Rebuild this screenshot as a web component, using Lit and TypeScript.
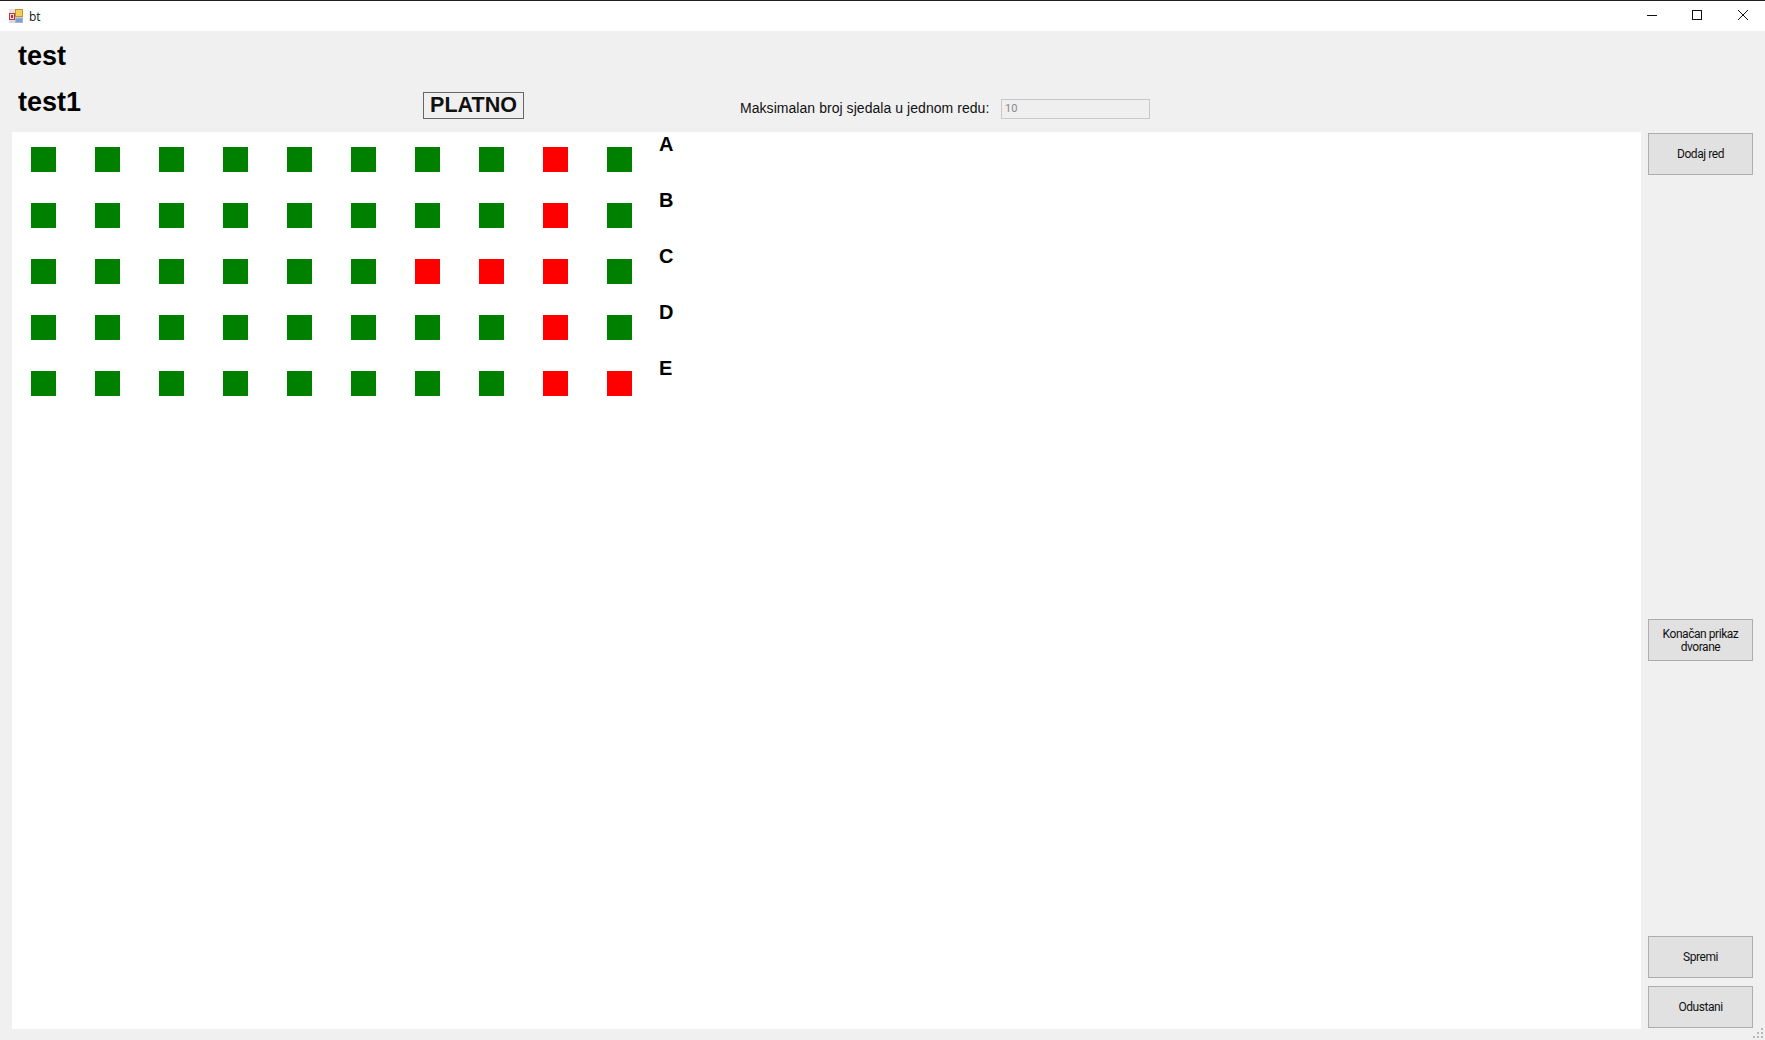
import { LitElement, html, css, svg } from "lit";
import { customElement } from "lit/decorators.js";

const ROWS: { letter: string; red: number[] }[] = [
  { letter: "A", red: [8] },
  { letter: "B", red: [8] },
  { letter: "C", red: [6, 7, 8] },
  { letter: "D", red: [8] },
  { letter: "E", red: [8, 9] },
];

@customElement("app-root")
export class AppRoot extends LitElement {
  static styles = css`
    :host { display: block; width: 1765px; height: 1040px; overflow: hidden; background: #f0f0f0; font-family: "Liberation Sans", Arial, sans-serif; color: #000; position: relative; }
    .window { display: flex; flex-direction: column; height: 1040px; }
    .titlebar { display: flex; align-items: center; height: 30px; background: #fff; border-top: 1px solid #1e1e1e; flex: none; }
    .app-icon { width: 14px; height: 14px; margin: 0 0 1px 9px; flex: none; }
    .title { margin-left: 6px; font: 12px "Open Sans", sans-serif; color: #111; }
    .controls { margin: 0 17px 2px auto; display: flex; gap: 35px; }
    .controls svg { width: 10px; height: 10px; display: block; }
    .controls svg:last-child { margin-left: 1px; }
    .head { display: flex; height: 101px; flex: none; }
    .titles { width: 423px; padding: 12px 0 0 18px; box-sizing: border-box; flex: none; font-size: 27px; font-weight: 700; line-height: 26px; }
    .titles div + div { margin-top: 20px; }
    .platno { margin-top: 61px; width: 101px; height: 27px; box-sizing: border-box; border: 1px solid #666; display: flex; align-items: center; justify-content: center; font-size: 21.5px; font-weight: 700; color: #111; flex: none; }
    .max-label { margin: 69px 0 0 216px; font-size: 14px; letter-spacing: 0.05px; line-height: 16px; width: 261px; flex: none; white-space: nowrap; color: #111; }
    .max-input { margin-top: 68px; width: 149px; height: 20px; box-sizing: border-box; border: 1px solid #c8c8c8; background: #efefef; color: #888; font: 11px/18px Roboto, sans-serif; padding-left: 3px; flex: none; }
    .body { display: flex; flex: 1; min-height: 0; }
    .panel { margin-left: 12px; width: 1629px; height: 897px; background: #fff; padding: 15px 0 0 19px; box-sizing: border-box; flex: none; }
    .row { display: flex; height: 56px; }
    .seats { display: flex; gap: 39px; }
    .seat { width: 25px; height: 25px; background: #008000; }
    .seat.red { background: #f00; }
    .letter { margin: -14px 0 0 27px; font-size: 20px; letter-spacing: -0.5px; font-weight: 700; line-height: 22px; }
    .side { margin-left: 7px; display: flex; flex-direction: column; padding-top: 1px; }
    button { width: 105px; height: 42px; box-sizing: border-box; border: 1px solid #adadad; background: #e1e1e1; padding: 1px 8px 0; font: 12px/13px Roboto, sans-serif; letter-spacing: -0.45px; color: #111; text-align: center; flex: none; }
    .b2 { margin-top: 444px; }
    .b3 { margin-top: 275px; }
    .b4 { margin-top: 8px; }
    .grip { position: absolute; right: 2px; bottom: 2px; width: 10px; height: 10px; }
  `;

  render() {
    return html`
      <div class="window">
        <div class="titlebar">
          <svg class="app-icon" viewBox="0 0 14 14">
            <rect x="0" y="0" width="14" height="14" fill="#e6e2e2"/>
            <rect x="6.5" y="0.5" width="7" height="7" fill="#f5cf55" stroke="#b8963a"/>
            <rect x="0.5" y="4.5" width="5" height="6" fill="#f1dede" stroke="#b5363c"/>
            <rect x="2" y="6" width="2" height="3" fill="#c3242c"/>
            <rect x="6.5" y="9" width="7" height="4.5" fill="#7ea0cc" stroke="#a9b6c9"/>
            <rect x="0.5" y="11.5" width="5" height="2" fill="#d4d4e4"/>
          </svg>
          <span class="title">bt</span>
          <div class="controls">
            <svg viewBox="0 0 10 10"><path d="M0 5.5H10" stroke="#111" fill="none"/></svg>
            <svg viewBox="0 0 10 10"><rect x="0.5" y="0.5" width="9" height="9" stroke="#111" fill="none"/></svg>
            <svg viewBox="0 0 10 10"><path d="M0 0L10 10M10 0L0 10" stroke="#111" fill="none"/></svg>
          </div>
        </div>
        <div class="head">
          <div class="titles"><div>test</div><div>test1</div></div>
          <div class="platno">PLATNO</div>
          <div class="max-label">Maksimalan broj sjedala u jednom redu:</div>
          <div class="max-input">10</div>
        </div>
        <div class="body">
          <div class="panel">
            ${ROWS.map(
              (r) => html`<div class="row">
                <div class="seats">
                  ${Array.from({ length: 10 }, (_, i) => html`<div class="seat ${r.red.includes(i) ? "red" : ""}"></div>`)}
                </div>
                <div class="letter">${r.letter}</div>
              </div>`
            )}
          </div>
          <div class="side">
            <button>Dodaj red</button>
            <button class="b2">Konačan prikaz dvorane</button>
            <button class="b3">Spremi</button>
            <button class="b4">Odustani</button>
          </div>
        </div>
      </div>
      <svg class="grip" viewBox="0 0 10 10">
        ${[[8, 0], [8, 4], [4, 4], [8, 8], [4, 8], [0, 8]].map(([x, y]) => svg`<rect x=${x} y=${y} width="2" height="2" fill="#b8b8b8"/>`)}
      </svg>
    `;
  }
}
